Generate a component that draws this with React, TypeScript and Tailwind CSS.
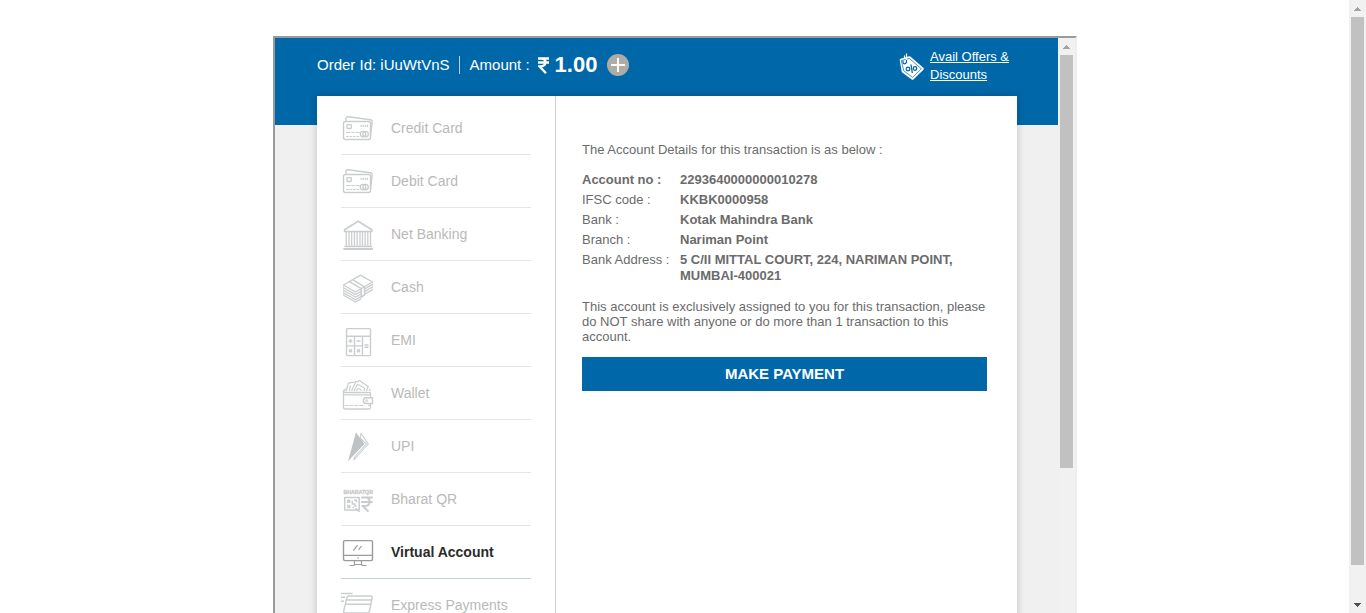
import type { ReactNode } from "react";

function NavIcon({ children, dark = false }: { children: ReactNode; dark?: boolean }) {
  return (
    <svg
      viewBox="0 0 32 32"
      aria-hidden="true"
      fill="none"
      stroke="currentColor"
      strokeWidth="1.4"
      strokeLinejoin="round"
      className={dark ? "size-8 shrink-0 overflow-visible text-[#9b9b9b]" : "size-8 shrink-0 overflow-visible text-[#cacdce]"}
    >
      {children}
    </svg>
  );
}

function CardIcon() {
  return (
    <NavIcon>
      <path d="M5 9V6.500Q5.200 4.600 7 4.700L29.500 7.700Q31.300 8 31.200 9.600L29.500 24" />
      <rect x="2.500" y="9.500" width="27" height="18" rx="2" />
      <rect x="6" y="12.700" width="4.300" height="3.800" rx="0.500" strokeWidth="1.300" />
      <path d="M19.500 13.800h7.500" strokeDasharray="1.200 0.900" strokeWidth="2.200" />
      <path d="M5.200 20.500h4m1 0h3.500m1 0h4" strokeWidth="1.100" />
      <path d="M5.200 24.500h13" strokeWidth="1" strokeDasharray="2.500 1" />
      <circle cx="22" cy="22.100" r="2.700" strokeWidth="1.300" />
      <circle cx="24.600" cy="22.100" r="2.700" strokeWidth="1.300" />
    </NavIcon>
  );
}

function BankIcon() {
  return (
    <NavIcon>
      <path d="M3.600 11.800 17.200 3.200 30.800 11.800V13.500H3.600Z" strokeWidth="1.700" />
      <path d="M5.200 14v13.500M8 14v13.500M10.700 14v13.500M13.500 14v13.500M16.200 14v13.500M19 14v13.500M21.500 14v13.500M24.200 14v13.500M26.800 14v13.500M29.500 14v13.500" strokeWidth="1.300" />
      <path d="M3.400 28.400h27.600M2.400 31h29.600" strokeWidth="1.900" />
    </NavIcon>
  );
}

function CashIcon() {
  return (
    <NavIcon>
      <path d="M2.500 14 19.500 4.200 31.500 11 14.500 21Z" />
      <path d="M8.500 10.600 20.300 17.600V26L23.500 24.200V15.800L11.700 8.700" strokeWidth="1.500" />
      <path d="M2.500 16.700 14.500 23.600 20.300 20.200M2.500 19.300 14.500 26.200 20.300 22.800M2.500 21.900 14.500 28.800 20.300 25.400M2.500 24.200 14.500 31 20.300 27.600M23.500 18 31.500 13.400M23.500 20.600 31.500 16M23.500 23.200 31.500 18.600" strokeWidth="1.300" />
      <path d="M2.500 14V24.200M31.500 11V18.600" strokeWidth="0.600" />
    </NavIcon>
  );
}

function CalculatorIcon() {
  return (
    <NavIcon>
      <rect x="5.500" y="4.600" width="24" height="27" rx="1" />
      <path d="M5.500 12.200h24M13.500 12.200v19.400M21.500 12.200v19.400M5.500 21.900h16" />
      <path d="M7.500 17h4M9.500 15v4M15.500 17h4M23.500 21h4M23.500 23.300h4M8 25.200l3 3m0-3-3 3M16 25.200l3 3m0-3-3 3" strokeWidth="1.400" />
    </NavIcon>
  );
}

function WalletIcon() {
  return (
    <NavIcon>
      <path d="M29.500 20V17Q29.500 15.500 28 15.500H4.500Q2.500 15.500 2.500 13.500V30Q2.500 32 4.500 32H28Q29.500 32 29.500 30.500V27M2.500 17.800H29" strokeWidth="1.300" />
      <path d="M3.500 28.500h20M27 28.500h2.500" strokeWidth="0.900" strokeDasharray="4 0.900" />
      <path d="M31.500 20.800H25Q22.400 21 22.400 23.700T25 26.500H31.500Z" />
      <circle cx="25.700" cy="23.700" r="1" strokeWidth="1" />
      <path d="M2.500 14 5 11.800M5.300 14 7.300 6.200 13.500 5.200M8.200 13.800 9.400 8.500M10.500 14 15 4.200Q17 5.500 18.300 3.500L27.200 9.500 25.500 14M28 11.800 29.500 14M13 14 16.500 7.200 23.700 11.200 22.800 14M15.500 14Q16.500 10.300 19.300 12.300 20.200 13 20 14" strokeWidth="1.200" />
    </NavIcon>
  );
}

function UpiIcon() {
  return (
    <NavIcon>
      <path d="M15 2.300 23.300 14 7 31.200Z" fill="currentColor" stroke="none" className="text-[#bfc3c6]" />
      <path d="M19.200 8 20 3.200 27.300 14 12.800 30 14 26.500 25.200 14Z" strokeWidth="1.100" />
    </NavIcon>
  );
}

function BharatQrIcon() {
  return (
    <NavIcon>
      <text x="2.600" y="11" fontSize="5.200" fontWeight="700" fontFamily="Liberation Sans, Arial, sans-serif" fill="currentColor" strokeWidth="0.400">
        BHARATQR
      </text>
      <rect x="3.700" y="14.500" width="14.500" height="12.500" strokeWidth="1.500" />
      <path d="M6.800 17.200h2v2h-2zM6.800 22.500h2v2h-2zM13 17.200h2.500v2M11.300 17.500v3.500h2.500v2H15.500M11.500 24.500h1.500M14.500 25 18.500 29" strokeWidth="1.400" />
      <path d="M20.200 14.500H31.800M20.200 19H31.800M21 14.500H24.500Q28.600 14.700 28.600 18.700T24.500 23H21.500L27.500 28.500" strokeWidth="2.100" />
    </NavIcon>
  );
}

function MonitorIcon() {
  return (
    <NavIcon dark>
      <rect x="2.500" y="4.600" width="29" height="20" rx="1.500" />
      <path d="M2.500 19.400h29M13.500 25v4M20.500 25v4M8.500 29.500h4l1.500-1h6l1.500 1h4" strokeWidth="1.200" />
      <path d="M12.300 14.700 16.500 9.200M17.500 13.800 20.500 10" strokeWidth="1.200" />
      <circle cx="17" cy="22" r="0.800" fill="currentColor" stroke="none" />
    </NavIcon>
  );
}

function ExpressIcon() {
  return (
    <NavIcon>
      <path d="M0 4.500h11.500M0 8.200h4M0 12.200h3" />
      <path d="M8 7H29.800Q31.500 7 31.200 8.500L28.500 22Q28.200 24 26.500 24H4.500Q2.300 24 2.700 22L5.800 8.800Q6.200 7 8 7ZM5.500 11H30.600M4.600 15.300H29.800" />
    </NavIcon>
  );
}

const methods: { label: string; icon: ReactNode; active?: boolean }[] = [
  { label: "Credit Card", icon: <CardIcon /> },
  { label: "Debit Card", icon: <CardIcon /> },
  { label: "Net Banking", icon: <BankIcon /> },
  { label: "Cash", icon: <CashIcon /> },
  { label: "EMI", icon: <CalculatorIcon /> },
  { label: "Wallet", icon: <WalletIcon /> },
  { label: "UPI", icon: <UpiIcon /> },
  { label: "Bharat QR", icon: <BharatQrIcon /> },
  { label: "Virtual Account", icon: <MonitorIcon />, active: true },
  { label: "Express Payments", icon: <ExpressIcon /> },
];

const details: [string, string][] = [
  ["Account no :", "2293640000000010278"],
  ["IFSC code :", "KKBK0000958"],
  ["Bank :", "Kotak Mahindra Bank"],
  ["Branch :", "Nariman Point"],
  ["Bank Address :", "5 C/II MITTAL COURT, 224, NARIMAN POINT, MUMBAI-400021"],
];

function OffersIcon() {
  return (
    <svg viewBox="0 0 26 30" className="h-[30px] w-[26px] shrink-0" aria-hidden="true" fill="none" strokeLinejoin="round">
      <path d="M2 9 10.500 6.500 23.500 17.800 13.500 27.500 4 20.500Z" fill="#fff" stroke="#fff" strokeWidth="2.600" />
      <path d="M2.300 9.600 10.300 7.400 22.300 17.800 13.500 26.400 4.800 19.800Z" stroke="#0067a8" strokeWidth="0.700" />
      <path d="M4 9.500v2.500q2.500 2 3.500-1V9" stroke="#0067a8" strokeWidth="1.200" />
      <path d="M7.500 9V2.500M5.500 7.500V4.500" stroke="#fff" strokeWidth="1.200" />
      <circle cx="9" cy="18" r="1.800" stroke="#0067a8" strokeWidth="1.300" />
      <circle cx="16" cy="17.500" r="1.800" stroke="#0067a8" strokeWidth="1.300" />
      <path d="M12 13.500 13.300 22" stroke="#0067a8" strokeWidth="1.300" />
    </svg>
  );
}

function ScrollArrow({ down = false, muted = false }: { down?: boolean; muted?: boolean }) {
  return (
    <svg viewBox="0 0 17 17" className="size-[17px] shrink-0" aria-hidden="true" shapeRendering="crispEdges">
      <path d={down ? "M5 7h7L8.500 11Z" : "M5 11h7L8.500 7Z"} fill={muted ? "#a3a3a3" : "#505050"} />
    </svg>
  );
}

function Header() {
  return (
    <header className="bg-[#0067a8] pb-[31px] pl-[42px] pr-12 text-white">
      <div className="flex h-14 items-center justify-between">
        <div className="flex items-center pb-0.5 text-[15px] leading-5">
          <span>Order Id: iUuWtVnS</span>
          <span className="ml-[9px] border-l border-[#b8d0e0] pl-2.5 leading-[18px]">Amount :</span>
          <strong className="ml-2 flex items-center gap-1.5 text-[22px] leading-6">
            <svg viewBox="0 0 11 17" className="h-[17px] w-[11px]" role="img" aria-label="Rupees" fill="none" stroke="#fff" strokeWidth="2.300">
              <path d="M0 1.500H11M0 5.500H11M0.500 1.500H3.500Q7.500 1.800 7.500 5.300T3.500 9.300H1.500L8 16.200" />
            </svg>
            1.00
          </strong>
          <button type="button" aria-label="Show amount details" className="ml-2.5 size-[22px] cursor-pointer rounded-full bg-[#adada5]">
            <svg viewBox="0 0 22 22" className="size-[22px]" aria-hidden="true" stroke="#fff" strokeWidth="2">
              <path d="M4 11h14M11 4v14" />
            </svg>
          </button>
        </div>
        <a href="#offers" className="flex items-center gap-[5px] text-[13px] leading-[18px] underline">
          <OffersIcon />
          <span className="w-20">Avail Offers &amp; Discounts</span>
        </a>
      </div>
    </header>
  );
}

function MethodNav() {
  return (
    <nav aria-label="Payment methods" className="w-[239px] shrink-0 border-r border-[#c9d0d3] px-6 pt-1.5">
      <ul>
        {methods.map((m) => (
          <li key={m.label} className={m.active ? "border-b border-[#c5d0d0]" : "border-b border-[#e3e5e6]"}>
            <a
              href="#method"
              aria-current={m.active ? "page" : undefined}
              className={
                m.active
                  ? "flex h-[52px] items-center gap-[18px] text-sm font-bold text-[#2b2b2b]"
                  : "flex h-[52px] items-center gap-[18px] text-sm text-[#b9b9b9]"
              }
            >
              {m.icon}
              {m.label}
            </a>
          </li>
        ))}
      </ul>
    </nav>
  );
}

function AccountPanel() {
  return (
    <section className="min-w-0 flex-1 pb-12 pl-[26px] pr-[30px] pt-[46px] text-[13px] leading-4 text-[#6b6b6b]">
      <p>The Account Details for this transaction is as below :</p>
      <dl className="mt-3.5 grid grid-cols-[98px_1fr] gap-y-1">
        {details.map(([label, value], i) => (
          <div key={label} className="contents">
            <dt className={i === 0 ? "font-bold" : ""}>{label}</dt>
            <dd className="pr-5 font-bold">{value}</dd>
          </div>
        ))}
      </dl>
      <p className="mt-[15px] leading-[15px]">
        This account is exclusively assigned to you for this transaction, please do NOT share with anyone or do more than 1 transaction to this account.
      </p>
      <button type="button" className="mt-[13px] h-[34px] w-full cursor-pointer bg-[#0067a8] text-[15px] font-bold leading-5 text-white">
        MAKE PAYMENT
      </button>
    </section>
  );
}

export default function App() {
  return (
    <div className="flex h-screen overflow-hidden bg-white font-['Liberation_Sans',Arial,sans-serif]">
      <main className="min-w-0 flex-1 pl-px pt-9">
        <div className="mx-auto flex w-full max-w-[804px] border-2 border-b-[#eeeeee] border-l-[#9a9a9a] border-r-[#eeeeee] border-t-[#9a9a9a] bg-[#f0f0f0]">
          <div className="min-w-0 flex-1">
            <Header />
            <div className="-mt-[29px] pb-10 pl-[42px] pr-[41px]">
              <div className="flex bg-white shadow-[0_0_8px_rgba(0,0,0,0.2)]">
                <MethodNav />
                <AccountPanel />
              </div>
            </div>
          </div>
          <div className="w-[17px] shrink-0 bg-[#f1f1f1]" aria-hidden="true">
            <ScrollArrow muted />
            <div className="mx-0.5 h-[413px] bg-[#c1c1c1]" />
          </div>
        </div>
      </main>
      <div className="flex w-[17px] shrink-0 flex-col bg-[#f1f1f1]" aria-hidden="true">
        <ScrollArrow muted />
        <div className="flex flex-1 flex-col">
          <div className="mx-0.5 h-[94.6%] bg-[#c1c1c1]" />
        </div>
        <ScrollArrow down />
      </div>
    </div>
  );
}
